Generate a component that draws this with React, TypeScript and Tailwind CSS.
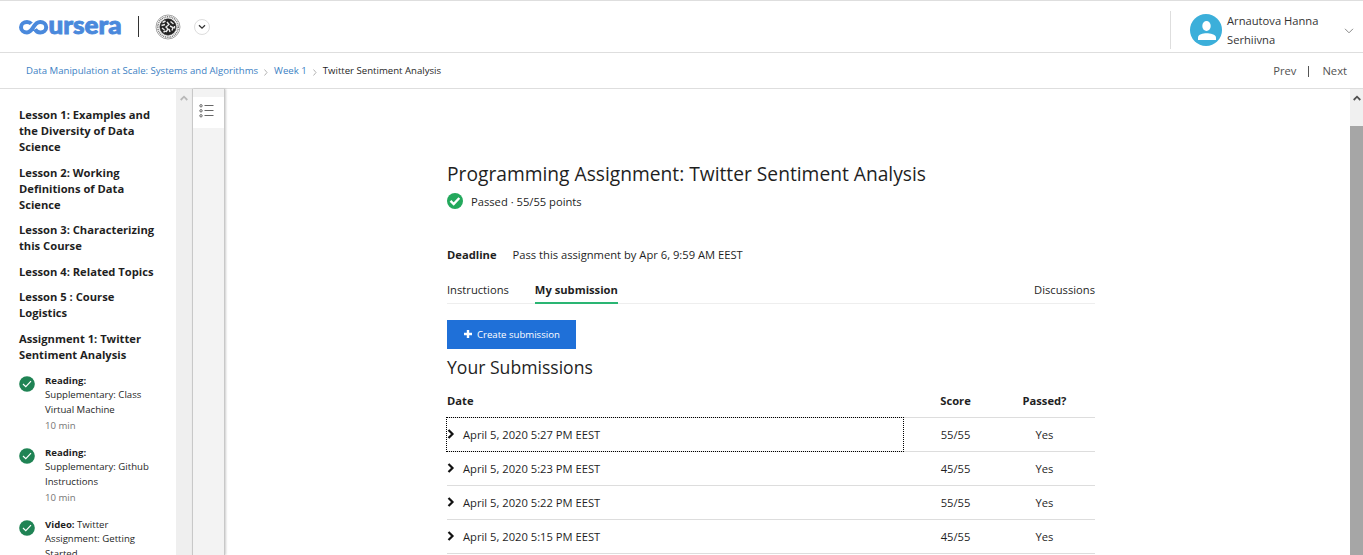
import React from "react";

const lessons = [
  ["Lesson 1: Examples and", "the Diversity of Data", "Science"],
  ["Lesson 2: Working", "Definitions of Data", "Science"],
  ["Lesson 3: Characterizing", "this Course"],
  ["Lesson 4: Related Topics"],
  ["Lesson 5 : Course", "Logistics"],
  ["Assignment 1: Twitter", "Sentiment Analysis"],
];

const items = [
  { kind: "Reading:", first: "", rest: ["Supplementary: Class", "Virtual Machine"], time: "10 min" },
  { kind: "Reading:", first: "", rest: ["Supplementary: Github", "Instructions"], time: "10 min" },
  { kind: "Video:", first: " Twitter", rest: ["Assignment: Getting", "Started"], time: "" },
];

const submissions = [
  { date: "April 5, 2020 5:27 PM EEST", score: "55/55" },
  { date: "April 5, 2020 5:23 PM EEST", score: "45/55" },
  { date: "April 5, 2020 5:22 PM EEST", score: "55/55" },
  { date: "April 5, 2020 5:15 PM EEST", score: "45/55" },
];

function Logo() {
  return (
    <svg width="104" height="18" viewBox="0 0 104 18" className="block shrink-0 overflow-visible" aria-label="coursera">
      <g fill="none" stroke="#4a89dc" strokeWidth="4">
        <path d="M12.300 5.800C11.200 4.500 9.600 3.900 8 3.900C4.700 3.900 2 6.300 2 9.200C2 12.200 4.700 14.400 8 14.400C14.800 14.400 13.800 3.900 21.200 3.900C24.500 3.900 27.200 6.300 27.200 9.200C27.200 12.200 24.500 14.400 21.200 14.400C18.800 14.400 17 13.200 16 11.300" />
      </g>
      <text x="29.500" y="16" textLength="73" lengthAdjust="spacingAndGlyphs" fill="#4a89dc" stroke="#4a89dc" strokeWidth="0.900" fontFamily="Lato, sans-serif" fontWeight="900" fontSize="25.500">ursera</text>
    </svg>
  );
}

function Seal() {
  return (
    <svg width="26" height="26" viewBox="0 0 26 26" className="block shrink-0">
      <circle cx="13" cy="13" r="12" fill="#fff" stroke="#999" strokeWidth="0.900" />
      <circle cx="13" cy="13" r="10.200" fill="none" stroke="#777" strokeWidth="1.600" strokeDasharray="1 0.800" />
      <circle cx="13" cy="13" r="8.200" fill="#222" stroke="#333" strokeWidth="0.600" />
      <path d="M7.500 8.500l3-1.500M6.500 11.500l3.500-1M7 14l2.500 2M12 8l2 2.500-3 2.500 2 2-2 3M15.500 7.500l3 2.500M15 12l3 1.500-1 3M8.500 18l2-1M15 18l-1-3M19.500 12v2.500" fill="none" stroke="#e8e8e8" strokeWidth="1.400" />
    </svg>
  );
}

function Check() {
  return (
    <svg width="16" height="16" viewBox="0 0 16 16" className="mt-[2px] block shrink-0">
      <circle cx="8" cy="8" r="7.800" fill="#1f8354" />
      <path d="M4 8l2.800 2.600L12 5.200" fill="none" stroke="#fff" strokeWidth="1.200" />
    </svg>
  );
}

function Header() {
  return (
    <header className="flex h-[53px] shrink-0 items-start border-y border-[#dedede]">
      <div className="ml-[19px] mt-[17px]"><Logo /></div>
      <div className="ml-[15px] mt-[15px] h-[21px] w-px bg-[#333]" />
      <div className="ml-[16px] mt-[13px]"><Seal /></div>
      <div className="ml-[13px] mt-[18px] flex h-4 w-4 items-center justify-center rounded-full border border-[#ddd]">
        <svg width="8" height="6" viewBox="0 0 8 6" className="shrink-0"><path d="M1 1.300l3 2.900 3-2.900" fill="none" stroke="#333" strokeWidth="1.300" /></svg>
      </div>
      <div className="ml-auto mt-[10px] flex h-[38px] w-[193px] items-start border-l border-[#dedede]">
        <svg width="32" height="32" viewBox="0 0 32 32" className="ml-[19px] mt-[3px] shrink-0">
          <circle cx="16" cy="16" r="16" fill="#3bafda" />
          <ellipse cx="16.500" cy="12" rx="4.200" ry="5" fill="#fff" />
          <path d="M8 26v-2.500c0-3 5-4.300 8.500-4.300S26 20.500 26 23.500V26z" fill="#fff" />
        </svg>
        <div className="ml-[5px] w-[100px] whitespace-nowrap text-[11.200px] leading-[19px] text-[#333]">
          <div>Arnautova Hanna</div>
          <div>Serhiivna</div>
        </div>
        <svg width="10" height="6" viewBox="0 0 10 6" className="ml-[17px] mt-[17px]"><path d="M1 .8l4 4 4-4" fill="none" stroke="#888" /></svg>
      </div>
    </header>
  );
}

function Crumb() {
  return <svg width="4" height="7" viewBox="0 0 4 7" className="mx-[6px] mt-[3px]"><path d="M.5 .5l2.500 3-2.500 3" fill="none" stroke="#aaa" strokeWidth=".9" /></svg>;
}

export default function App() {
  return (
    <div className="flex h-[555px] w-[1363px] flex-col overflow-hidden bg-white font-['Open_Sans',sans-serif] text-[#1f1f1f]">
      <Header />
      <nav className="flex h-[36px] shrink-0 items-center justify-between border-b border-[#dedede] pl-[26px] pr-[16px] pt-[2px]">
        <div className="flex items-center text-[9.600px] text-[#3d7fc4]">
          <span>Data Manipulation at Scale: Systems and Algorithms</span>
          <Crumb />
          <span>Week 1</span>
          <Crumb />
          <span className="text-[#1f1f1f]">Twitter Sentiment Analysis</span>
        </div>
        <div className="flex items-center text-[11.200px] text-[#525252]">
          <span>Prev</span>
          <span className="ml-[12px] mr-[13px] h-[11px] w-px bg-[#555]" />
          <span>Next</span>
        </div>
      </nav>
      <div className="flex min-h-0 flex-1">
        <aside className="w-[176px] shrink-0 overflow-hidden whitespace-nowrap pl-[19px] pt-[18px]">
          <div className="flex flex-col gap-[9.600px] text-[11.200px] font-bold leading-[16px]">
            {lessons.map((l) => (
              <div key={l[0]}>{l.map((t) => <div key={t}>{t}</div>)}</div>
            ))}
          </div>
          <div className="mt-[11px] flex flex-col">
            {items.map((it, i) => (
              <div key={i} className="flex h-[72px] gap-[10px]">
                <Check />
                <div className="text-[9.600px] leading-[14.400px]">
                  <div><b>{it.kind}</b>{it.first}</div>
                  {it.rest.map((t) => <div key={t}>{t}</div>)}
                  <div className="mt-[1.500px] text-[#757575]">{it.time}</div>
                </div>
              </div>
            ))}
          </div>
        </aside>
        <div className="flex w-[16px] shrink-0 justify-center bg-[#efefef] pt-[6px]">
          <svg width="8" height="6" viewBox="0 0 8 6"><path d="M.7 5L4 1.700 7.300 5" fill="none" stroke="#b8b8b8" strokeWidth="1.800" /></svg>
        </div>
        <div className="w-[33px] shrink-0 border-x border-[#c8c8c8] bg-[#f3f3f3] pt-[8px] shadow-[1px_0_2px_rgba(0,0,0,0.2)]">
          <div className="h-[31px] bg-white pl-[6px] pt-[7px]">
            <svg width="15" height="14" viewBox="0 0 15 14" fill="none" stroke="#555" strokeWidth="0.900">
              <circle cx="2" cy="1.800" r="1.200" /><circle cx="2" cy="6.800" r="1.200" /><circle cx="2" cy="11.800" r="1.200" />
              <path d="M5.500 1.500h9M5.500 6.500h9M5.500 11.500h9" />
            </svg>
          </div>
        </div>
        <main className="ml-[222px] w-[648px] shrink-0 whitespace-nowrap text-[11.200px]">
          <h1 className="mt-[71px] text-[19.220px] leading-[28px]">Programming Assignment: Twitter Sentiment Analysis</h1>
          <div className="mt-[5px] flex h-[16px] items-center gap-[8px]">
            <svg width="16" height="16" viewBox="0 0 16 16"><circle cx="8" cy="8" r="8" fill="#23a85c" /><path d="M3.500 7.800l3.200 3.200 5.600-6" fill="none" stroke="#fff" strokeWidth="2.400" /></svg>
            <span className="pt-[3px]">Passed · 55/55 points</span>
          </div>
          <div className="mt-[38px] flex h-[16px] gap-[16px] leading-[16px]">
            <b>Deadline</b><span>Pass this assignment by Apr 6, 9:59 AM EEST</span>
          </div>
          <div className="mt-[19px] flex h-[22px] border-b border-[#eee] leading-[16px]">
            <span>Instructions</span>
            <b className="ml-[26px] h-[22px] border-b-2 border-[#2ab573]">My submission</b>
            <span className="ml-auto">Discussions</span>
          </div>
          <button className="mt-[16px] flex h-[29px] w-[129px] items-center bg-[#1f70d8] pl-[17px] pt-px text-[9.600px] text-white">
            <svg width="8" height="8" viewBox="0 0 8 8" className="mb-[3px] mr-[5px]"><path d="M4 0v8M0 4h8" stroke="#fff" strokeWidth="2.400" /></svg>
            Create submission
          </button>
          <h2 className="mt-[6px] text-[17.600px] leading-[24px]">Your Submissions</h2>
          <div className="mt-[5px] flex h-[34px] border-b border-[#ddd] pt-[9px] font-bold leading-[16px]">
            <span className="w-[457px]">Date</span>
            <span className="w-[103px] text-center">Score</span>
            <span className="w-[75px] text-center">Passed?</span>
          </div>
          {submissions.map((s, i) => (
            <div key={s.date} className="flex h-[34px] border-b border-[#ddd] leading-[16px]">
              <div className={i === 0 ? "-ml-px -mt-px flex h-[35px] w-[458px] border border-dotted border-black pt-[9px]" : "flex w-[457px] pt-[9px]"}>
                <svg width="8" height="10" viewBox="0 0 8 10" className="mt-[2px]"><path d="M1.500 1l4 4-4 4" fill="none" stroke="#111" strokeWidth="2.200" /></svg>
                <span className="ml-[8px]">{s.date}</span>
              </div>
              <span className="w-[103px] pt-[9px] text-center">{s.score}</span>
              <span className="w-[75px] pt-[9px] text-center">Yes</span>
            </div>
          ))}
        </main>
        <div className="ml-auto flex w-[13px] shrink-0 flex-col items-center bg-[#f0f0f0] pt-[6px]">
          <svg width="8" height="6" viewBox="0 0 8 6"><path d="M.7 5L4 1.700 7.300 5" fill="none" stroke="#505050" strokeWidth="1.800" /></svg>
          <div className="mt-[25px] w-full flex-1 bg-[#a6a6a6]" />
        </div>
      </div>
    </div>
  );
}
